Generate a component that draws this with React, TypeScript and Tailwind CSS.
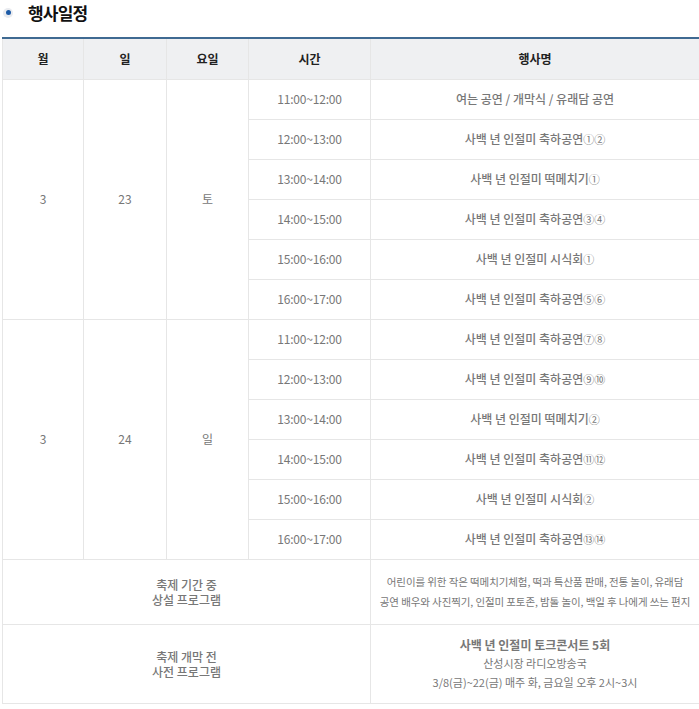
import React from "react";

type Slot = { time: string; name: string; mark: string };

const day1: Slot[] = [
  { time: "11:00~12:00", name: "여는 공연 / 개막식 / 유래담 공연", mark: "" },
  { time: "12:00~13:00", name: "사백 년 인절미 축하공연", mark: "①②" },
  { time: "13:00~14:00", name: "사백 년 인절미 떡메치기", mark: "①" },
  { time: "14:00~15:00", name: "사백 년 인절미 축하공연", mark: "③④" },
  { time: "15:00~16:00", name: "사백 년 인절미 시식회", mark: "①" },
  { time: "16:00~17:00", name: "사백 년 인절미 축하공연", mark: "⑤⑥" },
];

const day2: Slot[] = [
  { time: "11:00~12:00", name: "사백 년 인절미 축하공연", mark: "⑦⑧" },
  { time: "12:00~13:00", name: "사백 년 인절미 축하공연", mark: "⑨⑩" },
  { time: "13:00~14:00", name: "사백 년 인절미 떡메치기", mark: "②" },
  { time: "14:00~15:00", name: "사백 년 인절미 축하공연", mark: "⑪⑫" },
  { time: "15:00~16:00", name: "사백 년 인절미 시식회", mark: "②" },
  { time: "16:00~17:00", name: "사백 년 인절미 축하공연", mark: "⑬⑭" },
];

const days = [
  { month: "3", date: "23", weekday: "토", slots: day1 },
  { month: "3", date: "24", weekday: "일", slots: day2 },
];

const cell = "border border-[#e6e6e6] text-center align-middle";

const App = () => {
  return (
    <div
      className="w-[699px] bg-white text-[12px] text-[#777]"
      style={{ fontFamily: '"Noto Sans CJK KR", "Noto Sans", sans-serif' }}
    >
      <div className="flex items-center h-[25px] pl-[3px] gap-[15px]">
        <span className="w-[10px] h-[10px] rounded-full bg-[#e9ebef] flex items-center justify-center">
          <span className="w-[5px] h-[5px] rounded-full bg-[#1c5aa6]" />
        </span>
        <h2 className="text-[17px] font-bold text-[#111] leading-none tracking-[-0.8px]">
          행사일정
        </h2>
      </div>

      <table className="ml-[2px] mt-[12px] w-[697px] table-fixed border-collapse">
        <colgroup>
          <col className="w-[81px]" />
          <col className="w-[83px]" />
          <col className="w-[82px]" />
          <col className="w-[122px]" />
          <col className="w-[329px]" />
        </colgroup>
        <thead>
          <tr className="h-[41px] bg-[#eff0f2] text-[#222] font-bold">
            {["월", "일", "요일", "시간", "행사명"].map((h) => (
              <th key={h} className={`${cell} border-t-[#3f6a92] border-t-[2px] font-bold`}>
                {h}
              </th>
            ))}
          </tr>
        </thead>
        <tbody>
          {days.map((d) =>
            d.slots.map((s, i) => (
              <tr key={d.date + s.time} className="h-[40px]">
                {i === 0 && (
                  <>
                    <td rowSpan={6} className={cell}>{d.month}</td>
                    <td rowSpan={6} className={cell}>{d.date}</td>
                    <td rowSpan={6} className={cell}>{d.weekday}</td>
                  </>
                )}
                <td className={`${cell} tracking-[-0.2px]`}>{s.time}</td>
                <td className={`${cell} font-medium`}>
                  {s.name}
                  {s.mark && <span className="text-[11px] font-normal">{s.mark}</span>}
                </td>
              </tr>
            ))
          )}
          <tr className="h-[65px]">
            <td colSpan={4} className={`${cell} font-medium leading-[15px]`}>
              축제 기간 중
              <br />
              상설 프로그램
            </td>
            <td className={`${cell} text-[10.5px] leading-[20px] whitespace-nowrap tracking-[-0.1px]`}>
              어린이를 위한 작은 떡메치기체험, 떡과 특산품 판매, 전통 놀이, 유래담
              <br />
              공연 배우와 사진찍기, 인절미 포토존, 밤톨 놀이, 백일 후 나에게 쓰는 편지
            </td>
          </tr>
          <tr className="h-[79px]">
            <td colSpan={4} className={`${cell} font-medium leading-[15px]`}>
              축제 개막 전
              <br />
              사전 프로그램
            </td>
            <td className={`${cell} text-[11px] leading-[19px]`}>
              <div className="font-bold text-[12px]">사백 년 인절미 토크콘서트 5회</div>
              <div>산성시장 라디오방송국</div>
              <div>3/8(금)~22(금) 매주 화, 금요일 오후 2시~3시</div>
            </td>
          </tr>
        </tbody>
      </table>
    </div>
  );
};

export default App;
